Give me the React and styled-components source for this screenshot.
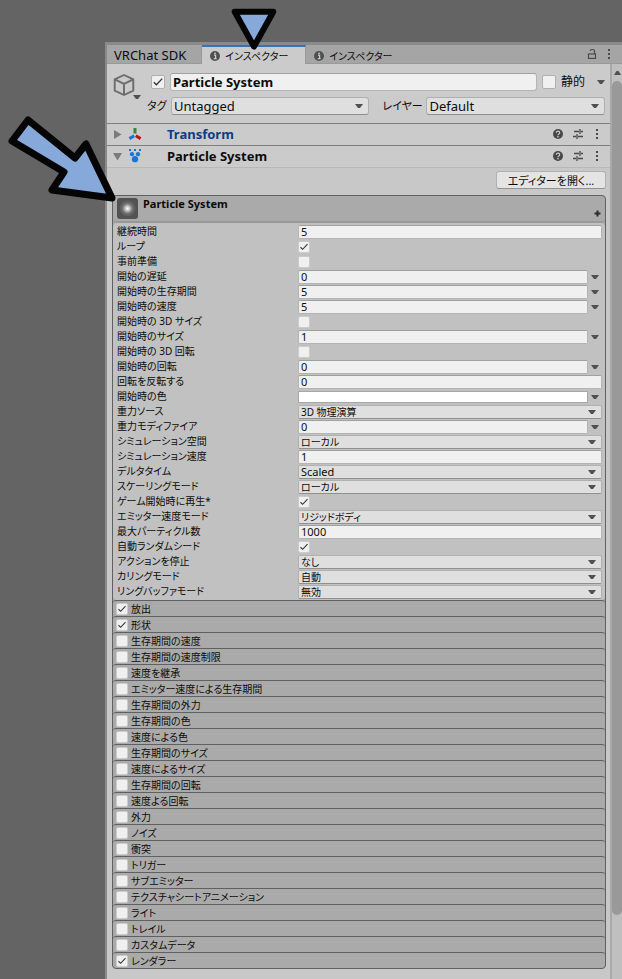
import React, { useId, useState } from 'react'
import styled, { createGlobalStyle, css } from 'styled-components';

const GlobalStyle = createGlobalStyle`
*, *::before, *::after {
box-sizing: border-box;
}
body {
margin: 0;
background-color: #646464;
}
body, button, input, select {
font-family: "Noto Sans", "Noto Sans CJK JP", sans-serif;
font-feature-settings: "palt";
color: #0c0c0c;
}
button, input, select {
margin: 0;
padding: 0;
}
`

const tick = `url("data:image/svg+xml,%3Csvg xmlns='http://www.w3.org/2000/svg' viewBox='0 0 12 12'%3E%3Cpath d='M1.8 6.3L4.4 8.8L10.2 2.6' fill='none' stroke='%23333' stroke-width='1.3'/%3E%3C/svg%3E")`

const Page = styled.div`
position: relative;
min-height: 100vh;
display: flex;
padding: 42px 0 0 105px;
`

const Window = styled.main`
flex: 1;
min-width: 0;
display: flex;
flex-direction: column;
border-top: 3px solid #8a8a8a;
border-left: 2px solid #8a8a8a;
background-color: #c8c8c8;
`

const TabBar = styled.div`
height: 19px;
display: flex;
background-color: #a5a5a5;
border-bottom: 1px solid #999999;
`

const Tab = styled.button`
display: flex;
align-items: center;
gap: 5px;
height: 19px;
padding: 0 17px 0 8px;
border: none;
border-top: 2px solid transparent;
border-right: 1px solid #999999;
background-color: transparent;
font-size: 10px;
line-height: 16px;
white-space: nowrap;
${props => props.$plain && css`
padding: 0 15px 2px 7px;
font-size: 13px;
`}
${props => props.$active && css`
background-color: #cbcbcb;
border-top-color: #3a72b0;
`}
${props => props.$last && css`
border-right: none;
`}
`

const TabTools = styled.div`
margin-left: auto;
padding-right: 11px;
display: flex;
align-items: center;
gap: 10px;
`

const IconButton = styled.button`
display: flex;
align-items: center;
justify-content: center;
border: none;
background: none;
`

const Body = styled.div`
flex: 1;
display: flex;
`

const Content = styled.div`
flex: 1;
min-width: 0;
padding-bottom: 10px;
`

const ScrollBar = styled.div`
width: 12px;
display: flex;
flex-direction: column;
background-color: #bfbfbf;
border-left: 2px solid #a9a9a9;
`

const ScrollUp = styled.div`
height: 17px;
display: flex;
align-items: center;
justify-content: center;
`

const ScrollThumb = styled.div`
flex: 13;
border-radius: 5px;
background-color: #999999;
`

const ScrollRest = styled.div`
flex: 1;
`

const ObjectHeader = styled.header`
display: flex;
gap: 5px;
padding: 9px 5px 8px 6px;
border-bottom: 1px solid #7f7f7f;
background-color: #cbcbcb;
`

const ObjectIcon = styled.div`
display: flex;
align-items: flex-start;
`

const ObjectFields = styled.div`
flex: 1;
min-width: 0;
display: flex;
flex-direction: column;
gap: 6px;
`

const HeaderRow = styled.div`
display: flex;
align-items: center;
height: 18px;
gap: 6px;
font-size: 11px;
line-height: 18px;
label {
white-space: nowrap;
}
`

const NameRow = styled(HeaderRow)`
gap: 5px;
padding-left: 4px;
font-size: 12px;
`

const TagLabel = styled.label`
width: 18px;
flex: none;
`

const LayerLabel = styled.label`
width: 38px;
margin-left: 7px;
flex: none;
`

const StaticLabel = styled.label`
margin-right: 7px;
`

const Check = styled.input`
appearance: none;
flex: none;
width: ${props => props.$large ? '14px' : '12px'};
height: ${props => props.$large ? '14px' : '12px'};
border: 1px solid ${props => props.$large ? '#b0b0b0' : '#cccccc'};
border-radius: 2px;
background-color: #f0f0f0;
&:checked {
background-image: ${tick};
}
`

const TextBox = styled.input`
flex: 1;
min-width: 0;
width: 100%;
height: 14px;
padding: 0 2px;
border: 1px solid #b4b4b4;
border-top-color: #a0a0a0;
border-radius: 2px;
background-color: #f0f0f0;
font-size: 11px;
line-height: 12px;
`

const NameBox = styled(TextBox)`
height: 18px;
border-radius: 3px;
font-size: 13px;
font-weight: 700;
line-height: 16px;
`

const SelectWrap = styled.div`
flex: ${props => props.$grow || 1};
min-width: 0;
display: grid;
align-items: center;
select, svg {
grid-area: 1 / 1;
}
svg {
justify-self: end;
margin-right: 6px;
pointer-events: none;
}
`

const SelectBox = styled.select`
appearance: none;
width: 100%;
height: ${props => props.$large ? '18px' : '14px'};
padding: 0 2px;
border: 1px solid #b0b0b0;
border-bottom-color: #909090;
border-radius: ${props => props.$large ? '3px' : '2px'};
background-color: #dfdfdf;
font-size: ${props => props.$large ? '13px' : props.$kana ? '10px' : '11px'};
line-height: ${props => props.$large ? '16px' : '12px'};
`

const ComponentBar = styled.div`
height: 22px;
display: flex;
align-items: center;
gap: 6px;
padding: 0 11px 1px 6px;
border-bottom: 1px solid ${props => props.$open ? '#b8b8b8' : '#7f7f7f'};
background-color: #cbcbcb;
h2 {
flex: 1;
margin: 0 0 0 19px;
font-size: 13px;
line-height: 20px;
color: ${props => props.$open ? '#0c0c0c' : '#0b3d87'};
}
`

const BarTools = styled.div`
display: flex;
align-items: center;
gap: 10px;
`

const EditorRow = styled.div`
display: flex;
justify-content: flex-end;
padding: 3px 4px 6px 0;
`

const EditorButton = styled.button`
width: 110px;
height: 18px;
border: 1px solid #b0b0b0;
border-bottom-color: #939393;
border-radius: 3px;
background-color: #e4e4e4;
font-size: 11px;
line-height: 15px;
white-space: nowrap;
`

const Module = styled.section`
margin: 0 4px 0 5px;
border: 1px solid #606060;
border-radius: 4px;
background-color: #aaaaaa;
overflow: hidden;
`

const ModuleHeader = styled.div`
height: 27px;
display: flex;
gap: 5px;
padding: 2px 4px 0 4px;
border-bottom: 2px solid #989898;
border-radius: 0 0 4px 4px;
h3 {
flex: 1;
margin: 0;
font-size: 11px;
line-height: 12px;
}
`

const AddButton = styled(IconButton)`
align-self: flex-end;
padding-bottom: 4px;
`

const Properties = styled.div`
padding: 1px 3px 1px 4px;
background-color: #c1c1c1;
border-radius: 4px;
`

const Property = styled.div`
display: grid;
grid-template-columns: 181px 1fr;
align-items: center;
height: 15px;
font-size: 10px;
label {
align-self: start;
line-height: 14px;
white-space: nowrap;
}
`

const Value = styled.div`
display: flex;
align-items: center;
gap: 3px;
padding-right: ${props => props.$menu ? '3px' : '0'};
`

const ColorBox = styled.input`
appearance: none;
flex: 1;
min-width: 0;
height: 12px;
border: 1px solid #a6a6a6;
background-color: #ffffff;
&::-webkit-color-swatch-wrapper {
padding: 0;
}
&::-webkit-color-swatch {
border: none;
border-radius: 0;
}
`

const SubModule = styled.label`
display: flex;
align-items: center;
gap: 3px;
height: 16px;
padding-left: 3px;
border-top: 1px solid #606060;
border-radius: 3px;
font-size: 10px;
line-height: 14px;
`

const Overlay = styled.svg`
position: absolute;
top: ${props => props.$top};
left: ${props => props.$left};
pointer-events: none;
`

const properties = [
    { label: '継続時間', type: 'text', value: '5' },
    { label: 'ループ', type: 'check', value: true },
    { label: '事前準備', type: 'check', value: false },
    { label: '開始の遅延', type: 'text', value: '0', menu: true },
    { label: '開始時の生存期間', type: 'text', value: '5', menu: true },
    { label: '開始時の速度', type: 'text', value: '5', menu: true },
    { label: '開始時の 3D サイズ', type: 'check', value: false },
    { label: '開始時のサイズ', type: 'text', value: '1', menu: true },
    { label: '開始時の 3D 回転', type: 'check', value: false },
    { label: '開始時の回転', type: 'text', value: '0', menu: true },
    { label: '回転を反転する', type: 'text', value: '0' },
    { label: '開始時の色', type: 'color', value: '#ffffff', menu: true },
    { label: '重力ソース', type: 'select', value: '3D 物理演算', kana: true },
    { label: '重力モディファイア', type: 'text', value: '0', menu: true },
    { label: 'シミュレーション空間', type: 'select', value: 'ローカル', kana: true },
    { label: 'シミュレーション速度', type: 'text', value: '1' },
    { label: 'デルタタイム', type: 'select', value: 'Scaled' },
    { label: 'スケーリングモード', type: 'select', value: 'ローカル', kana: true },
    { label: 'ゲーム開始時に再生*', type: 'check', value: true },
    { label: 'エミッター速度モード', type: 'select', value: 'リジッドボディ', kana: true },
    { label: '最大パーティクル数', type: 'text', value: '1000' },
    { label: '自動ランダムシード', type: 'check', value: true },
    { label: 'アクションを停止', type: 'select', value: 'なし', kana: true },
    { label: 'カリングモード', type: 'select', value: '自動', kana: true },
    { label: 'リングバッファモード', type: 'select', value: '無効', kana: true },
]

const subModules = [
    { label: '放出', on: true },
    { label: '形状', on: true },
    { label: '生存期間の速度' },
    { label: '生存期間の速度制限' },
    { label: '速度を継承' },
    { label: 'エミッター速度による生存期間' },
    { label: '生存期間の外力' },
    { label: '生存期間の色' },
    { label: '速度による色' },
    { label: '生存期間のサイズ' },
    { label: '速度によるサイズ' },
    { label: '生存期間の回転' },
    { label: '速度よる回転' },
    { label: '外力' },
    { label: 'ノイズ' },
    { label: '衝突' },
    { label: 'トリガー' },
    { label: 'サブエミッター' },
    { label: 'テクスチャシートアニメーション' },
    { label: 'ライト' },
    { label: 'トレイル' },
    { label: 'カスタムデータ' },
    { label: 'レンダラー', on: true },
]

const Caret = () => (
    <svg width="8" height="6" viewBox="0 0 8 6"><path d="M0 1h8L5 5H3z" fill="#50504c" /></svg>
)

const InfoIcon = () => (
    <svg width="10" height="10" viewBox="0 0 10 10">
        <circle cx="5" cy="5" r="5" fill="#505050" />
        <path d="M4 4.2h1.6v3.2M3.8 7.6h2.8" stroke="#cbcbcb" strokeWidth="1.2" fill="none" />
        <rect x="4.3" y="1.6" width="1.5" height="1.5" fill="#cbcbcb" />
    </svg>
)

const KebabIcon = () => (
    <svg width="4" height="12" viewBox="0 0 4 12" fill="#4a4a4a">
        <rect x="1" y="1" width="2" height="2" />
        <rect x="1" y="5" width="2" height="2" />
        <rect x="1" y="9" width="2" height="2" />
    </svg>
)

const LockIcon = () => (
    <svg width="10" height="12" viewBox="0 0 10 12" fill="none" stroke="#4a4a4a" strokeWidth="1.2">
        <rect x="1.5" y="6" width="7" height="4.4" />
        <path d="M7.5 6V3.2Q7.5 1.5 5.5 1.5H4.8Q3.3 1.5 3.3 3" />
    </svg>
)

const HelpIcon = () => (
    <svg width="10" height="10" viewBox="0 0 10 10">
        <circle cx="5" cy="5" r="5" fill="#484848" />
        <path d="M3.3 3.8Q3.4 2.2 5 2.2Q6.7 2.2 6.7 3.7Q6.7 4.6 5.8 5Q5 5.4 5 6.2" stroke="#cbcbcb" strokeWidth="1.2" fill="none" />
        <rect x="4.3" y="7" width="1.4" height="1.4" fill="#cbcbcb" />
    </svg>
)

const PresetIcon = () => (
    <svg width="12" height="10" viewBox="0 0 12 10" fill="none" stroke="#484848" strokeWidth="1.3">
        <path d="M1 2.5h5M8 2.5h2M7 0v5M0 7.5h3M5 7.5h5M4 5v5" />
    </svg>
)

const CubeIcon = () => (
    <svg width="29" height="28" viewBox="0 0 29 28">
        <path d="M11 2L20.3 6.4V17.6L11 22L1.7 17.6V6.4ZM1.7 6.4L11 10.8L20.3 6.4M11 10.8V22" fill="none" stroke="#6c6c6c" strokeWidth="1.9" strokeLinejoin="round" />
        <path d="M20 22h8l-3 4h-2z" fill="#50504c" />
    </svg>
)

const TransformIcon = () => (
    <svg width="14" height="14" viewBox="0 0 14 14" strokeWidth="3">
        <path d="M7 1V6.5" stroke="#2f8a33" />
        <path d="M6.2 8.8L1.4 11.6" stroke="#1673d8" />
        <path d="M7.8 8.8L12.6 11.6" stroke="#b71414" />
    </svg>
)

const ParticleIcon = () => (
    <svg width="14" height="14" viewBox="0 0 14 14" fill="#1673d8">
        <circle cx="7" cy="10.2" r="3.1" />
        <circle cx="4" cy="5.2" r="2.1" />
        <circle cx="10" cy="5.2" r="2.1" />
        <rect x="1" y="0" width="2" height="2" />
        <rect x="6" y="0" width="2" height="2" />
        <rect x="11" y="0" width="2" height="2" />
    </svg>
)

const Foldout = ({ open }) => (
    <svg width="9" height="9" viewBox="0 0 9 9" fill="#7b7b7b">
        <path d={open ? 'M0 1h9L4.5 8.5z' : 'M1 0l7.5 4.5L1 9z'} />
    </svg>
)

const ParticleThumb = () => (
    <svg width="21" height="21" viewBox="0 0 21 21">
        <defs>
            <radialGradient id="glow">
                <stop offset="0" stopColor="#ffffff" />
                <stop offset="0.25" stopColor="#c8c8c8" />
                <stop offset="0.6" stopColor="#707070" />
                <stop offset="1" stopColor="#525252" />
            </radialGradient>
        </defs>
        <rect width="21" height="21" rx="3" fill="#525252" />
        <circle cx="10.5" cy="10.5" r="8.5" fill="url(#glow)" />
    </svg>
)

const Select = ({ id, value, large, kana, grow }) => (
    <SelectWrap $grow={grow}>
        <SelectBox id={id} defaultValue={value} $large={large} $kana={kana}>
            <option value={value}>{value}</option>
        </SelectBox>
        <Caret />
    </SelectWrap>
)

const PropertyRow = ({ item }) => {
    const id = useId()
    return (
        <Property>
            <label htmlFor={id}>{item.label}</label>
            <Value $menu={item.menu}>
                {item.type === 'text' && <TextBox id={id} defaultValue={item.value} />}
                {item.type === 'check' && <Check id={id} type="checkbox" defaultChecked={item.value} />}
                {item.type === 'color' && <ColorBox id={id} type="color" defaultValue={item.value} />}
                {item.type === 'select' && <Select id={id} value={item.value} kana={item.kana} />}
                {item.menu && <IconButton aria-label={item.label}><Caret /></IconButton>}
            </Value>
        </Property>
    )
}

const ComponentHeader = ({ title, icon, open }) => (
    <ComponentBar $open={open}>
        <IconButton aria-label={title} aria-expanded={!!open}><Foldout open={open} /></IconButton>
        {icon}
        <h2>{title}</h2>
        <BarTools>
            <IconButton aria-label="Help"><HelpIcon /></IconButton>
            <IconButton aria-label="Presets"><PresetIcon /></IconButton>
            <IconButton aria-label="Menu"><KebabIcon /></IconButton>
        </BarTools>
    </ComponentBar>
)

function App() {
    const [tab, setTab] = useState(1)
    return (
        <Page>
            <GlobalStyle />
            <Window>
                <TabBar role="tablist">
                    <Tab role="tab" aria-selected={tab === 0} $plain $active={tab === 0} onClick={() => setTab(0)}>VRChat SDK</Tab>
                    <Tab role="tab" aria-selected={tab === 1} $active={tab === 1} onClick={() => setTab(1)}><InfoIcon />インスペクター</Tab>
                    <Tab role="tab" aria-selected={tab === 2} $last $active={tab === 2} onClick={() => setTab(2)}><InfoIcon />インスペクター</Tab>
                    <TabTools>
                        <IconButton aria-label="Lock"><LockIcon /></IconButton>
                        <IconButton aria-label="Menu"><KebabIcon /></IconButton>
                    </TabTools>
                </TabBar>
                <Body>
                    <Content>
                        <ObjectHeader>
                            <ObjectIcon><CubeIcon /></ObjectIcon>
                            <ObjectFields>
                                <NameRow>
                                    <Check $large type="checkbox" defaultChecked aria-label="Active" />
                                    <NameBox aria-label="Name" defaultValue="Particle System" />
                                    <Check $large type="checkbox" id="static" />
                                    <StaticLabel htmlFor="static">静的</StaticLabel>
                                    <IconButton aria-label="Static menu"><Caret /></IconButton>
                                </NameRow>
                                <HeaderRow>
                                    <TagLabel htmlFor="tag">タグ</TagLabel>
                                    <Select id="tag" value="Untagged" large grow={10} />
                                    <LayerLabel htmlFor="layer">レイヤー</LayerLabel>
                                    <Select id="layer" value="Default" large grow={9} />
                                </HeaderRow>
                            </ObjectFields>
                        </ObjectHeader>
                        <ComponentHeader title="Transform" icon={<TransformIcon />} />
                        <ComponentHeader title="Particle System" icon={<ParticleIcon />} open />
                        <EditorRow>
                            <EditorButton>エディターを開く...</EditorButton>
                        </EditorRow>
                        <Module>
                            <ModuleHeader>
                                <ParticleThumb />
                                <h3>Particle System</h3>
                                <AddButton aria-label="Add module">
                                    <svg width="7" height="7" viewBox="0 0 7 7"><path d="M3.5 0.5v6M0.5 3.5h6" stroke="#2c2c2c" strokeWidth="2" /></svg>
                                </AddButton>
                            </ModuleHeader>
                            <Properties>
                                {properties.map(item => <PropertyRow key={item.label} item={item} />)}
                            </Properties>
                            {subModules.map(item => (
                                <SubModule key={item.label}>
                                    <Check type="checkbox" defaultChecked={!!item.on} />
                                    {item.label}
                                </SubModule>
                            ))}
                        </Module>
                    </Content>
                    <ScrollBar>
                        <ScrollUp><svg width="7" height="4" viewBox="0 0 7 4"><path d="M0 4h7L4.5 0h-2z" fill="#505050" /></svg></ScrollUp>
                        <ScrollThumb />
                        <ScrollRest />
                    </ScrollBar>
                </Body>
            </Window>
            <Overlay $top="5px" $left="230px" width="48" height="48" viewBox="0 0 48 48">
                <path d="M4.7 6.7H43.3L24 41.5Z" fill="#86a9da" stroke="#050505" strokeWidth="6" strokeLinejoin="round" />
            </Overlay>
            <Overlay $top="112px" $left="6px" width="114" height="92" viewBox="0 0 114 92">
                <path d="M22 8L6 29L58 60L46 78L106 86L80 32L69 46Z" fill="#86a9da" stroke="#050505" strokeWidth="7" strokeLinejoin="round" />
            </Overlay>
        </Page>
    )
}

export default App
